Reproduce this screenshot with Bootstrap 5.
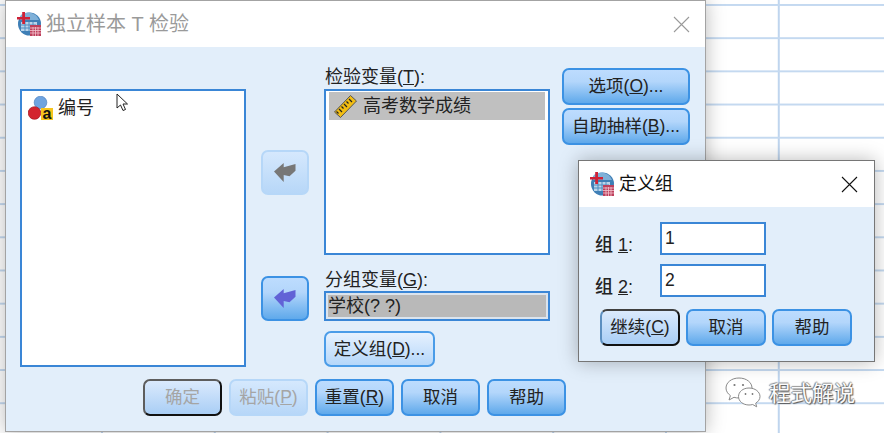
<!DOCTYPE html>
<html lang="zh-CN">
<head>
  <meta charset="UTF-8">
  <meta name="viewport" content="width=device-width, initial-scale=1">
  <title>独立样本 T 检验</title>
  <link href="https://cdn.jsdelivr.net/npm/bootstrap@5.3.2/dist/css/bootstrap.min.css" rel="stylesheet">
  <style>
    body {
      width: 884px;
      height: 433px;
      overflow: hidden;
      position: relative;
      background-color: #fff;
      background-image:
        linear-gradient(#c4d9f0 2px, transparent 2px),
        linear-gradient(90deg, #bfd5ee 2px, transparent 2px);
      background-size: 100% 33.2px, 112.8px 100%;
      background-position: 0 4px, 101px 0;
      font-family: "Liberation Sans", "Noto Sans CJK SC", sans-serif;
      font-size: 17.5px;
      color: #222;
    }

    /* windows on the desktop */
    .win {
      position: absolute;
      background: #e2eefa;
      box-shadow: 0 0 18px rgba(0, 0, 0, .28);
    }
    .win-main { left: 5px; top: 0; width: 701px; height: 432px; border: 1px solid #a3a3a3; }
    .win-group { left: 578px; top: 160px; width: 297px; height: 202px; border: 1px solid #767676; }

    .win-title { background: #fff; gap: 5px; }
    .win-main .win-title { height: 46px; padding-left: 11px; padding-right: 15px; font-size: 20px; color: #9a9a9a; }
    .win-group .win-title { height: 46px; padding-left: 11px; padding-right: 16px; font-size: 18px; color: #111; }
    .win-title svg.app-ico { width: 24px; height: 24px; }

    /* main dialog */
    .main-body { padding: 21px 14px 0; }
    .col-list { width: 226px; margin-top: 21px; }
    .col-arrows { width: 48px; margin-left: 15px; padding-top: 82px; gap: 81px; }
    .col-fields { width: 226px; margin-left: 15px; }
    .col-side { width: 128px; margin-left: 12px; gap: 3px; }
    .field-label { height: 21px; line-height: 18px; white-space: nowrap; padding-left: 1px; font-size: 18px; }
    .field-label-b { height: 36px; line-height: 50px; }

    .var-box { border: 2px solid #3a86d6; background: #fff; border-radius: 0; }
    .box-left { height: 278px; padding: 3px 6px; }
    .box-test { height: 166px; padding: 1px 3px; }
    .var-row {
      background: transparent;
      border: 0;
      border-radius: 0;
      padding: 0;
      height: 28px;
      gap: 5px;
      font-size: 18px;
      color: #222;
    }
    .var-row.is-picked { background: #c0c0c0; padding-left: 4px; }
    .var-row svg { width: 25px; height: 25px; flex: none; }

    .group-field {
      height: 30px;
      border: 2px solid #3a86d6;
      outline: 2px solid #dbe4ee;
      outline-offset: -4px;
      background: #b9b9b9;
      padding-left: 2px;
      line-height: 27px;
      font-size: 18px;
      white-space: pre;
    }

    /* buttons */
    .spss-btn {
      --bs-btn-padding-x: 0;
      --bs-btn-padding-y: 0;
      --bs-btn-font-size: 17.5px;
      --bs-btn-border-width: 2px;
      --bs-btn-border-radius: 7px;
      --bs-btn-disabled-opacity: 1;
      --bs-btn-color: #222;
      --bs-btn-disabled-color: #a5a5a5;
      height: 37px;
      white-space: nowrap;
      color: #222;
      border-color: #3c92e4;
      background: linear-gradient(#bddcfe, #b3d6fb 35%, #5fa9eb);
    }
    .spss-btn:disabled { color: #a5a5a5; border-color: #b6d7f8; background: linear-gradient(#d5e8fd, #b7d7f8); }
    .btn-soft { background: linear-gradient(#e6f1fe, #b5d7fa); border-color: #4a9ce8; }
    .btn-focus {
      border-color: #3f3f3f #111 #111 #5c8fc0;
      background: linear-gradient(#dbeafd, #a9cef5);
    }
    .btn-focus:disabled { border-color: #5d5d5d #111 #111 #5d5d5d; background: linear-gradient(#dbeafd, #a9cef5); }
    .btn-arrow { width: 48px; height: 45px; }
    .btn-arrow svg { width: 22px; height: 19px; }
    .btn-wide { width: 111px; height: 36px; margin-top: 10px; }
    .bottom-row { margin-top: 12px; margin-left: 123px; gap: 7px; }
    .bottom-row .spss-btn { width: 79px; }

    /* group dialog */
    .group-body { padding: 15px 21px 0 16px; }
    .group-row { height: 33px; margin-bottom: 9px; }
    .group-row label { width: 65px; padding-top: 13px; margin: 0; font-size: 18px; font-weight: 500; }
    .group-input {
      width: 106px;
      height: 33px;
      padding: 0 3px;
      border: 2px solid #3a86d6;
      border-radius: 0;
      font-size: 17.5px;
      color: #222;
    }
    .group-btns { margin-left: 5px; margin-top: 12px; gap: 6px; }
    .group-btns .spss-btn { width: 80px; }

    .close-x { width: 17px; height: 17px; }

    .cursor-ico { position: absolute; left: 116px; top: 93px; width: 13px; height: 19px; }

    /* watermark */
    .wm { position: absolute; left: 725px; top: 375px; gap: 8px; }
    .wm svg { width: 36px; height: 32px; }
    .wm span {
      font-size: 21.5px;
      color: #fbfbfb;
      text-shadow: 1px 1px 1px #555, -1px 0 1px #777, 0 -1px 1px #999;
      margin-top: 3px;
      white-space: nowrap;
    }
  </style>
</head>
<body>
  <svg width="0" height="0" class="position-absolute">
    <symbol id="spss" viewBox="0 0 24 24">
      <circle cx="12.5" cy="12" r="11.5" fill="#3f7fb6"/>
      <path d="M3 4a11.5 11.5 0 0 1 19 4H3z" fill="#7fb0d8"/>
      <path d="M4 10h16v9H4z" fill="#b9d4ea"/>
      <path d="M4 13h15M4 16h13M8 10v9M12 10v9M16 10v9" stroke="#4f8cc0" stroke-width="1"/>
      <path d="M0 5h13v2.6H0z M5.2 0h2.8v12H5.200z" fill="#cf2136"/>
      <rect x="13" y="13" width="11" height="11" fill="#bd3f5b"/>
      <path d="M13 16h11M13 18.500h11M13 21h11M16 15v9M18.500 15v9M21 15v9" stroke="#f2c4cf" stroke-width=".8"/>
    </symbol>
    <symbol id="back-arrow" viewBox="0 0 22 19">
      <path d="M0 8.500 9.700 0v4.300L21.500 1v6.700l-6 5.600-5.800-1.300V19z"/>
    </symbol>
    <symbol id="x-mark" viewBox="0 0 17 17">
      <path d="M1 1l15 15M16 1L1 16" stroke="currentColor" stroke-width="1.100" fill="none"/>
    </symbol>
  </svg>

  <div class="win win-main">
    <div class="win-title d-flex align-items-center">
      <svg class="app-ico"><use href="#spss"/></svg>
      <span>独立样本 T 检验</span>
      <svg class="close-x ms-auto"><use href="#x-mark"/></svg>
    </div>
    <div class="main-body">
      <div class="d-flex">
        <div class="col-list">
          <div class="var-box box-left list-group">
            <div class="list-group-item var-row d-flex align-items-center">
              <svg viewBox="0 0 25 25">
                <circle cx="12.500" cy="6.500" r="6.300" fill="#6fa4e0" stroke="#4a7fc0" stroke-width=".7"/>
                <circle cx="6.500" cy="17" r="6.300" fill="#d3242f" stroke="#a51822" stroke-width=".7"/>
                <rect x="13" y="12" width="12" height="12" fill="#f6c51d"/>
                <text x="19" y="23" text-anchor="middle" font-family="Liberation Sans" font-weight="700" font-size="16" fill="#111">a</text>
              </svg>
              <span>编号</span>
            </div>
          </div>
        </div>
        <div class="col-arrows d-flex flex-column">
          <button class="btn spss-btn btn-arrow d-flex align-items-center justify-content-center" disabled>
            <svg fill="#777"><use href="#back-arrow"/></svg>
          </button>
          <button class="btn spss-btn btn-arrow d-flex align-items-center justify-content-center">
            <svg fill="#6262d6"><use href="#back-arrow"/></svg>
          </button>
        </div>
        <div class="col-fields d-flex flex-column align-items-start">
          <div class="field-label">检验变量(<u>T</u>):</div>
          <div class="var-box box-test list-group w-100">
            <div class="list-group-item var-row is-picked d-flex align-items-center">
              <svg viewBox="0 0 25 25">
                <path d="M17.500 1.500 23.500 7 7.500 23.500 1.500 18z" fill="#f2bd12" stroke="#555" stroke-width="1"/>
                <path d="M16 5l3 3M13.500 7.500l2 2M11 10l3 3M8.500 12.500l2 2M6 15l3 3M3.500 17.500l2 2" stroke="#222" stroke-width="1.200"/>
              </svg>
              <span>高考数学成绩</span>
            </div>
          </div>
          <div class="field-label field-label-b">分组变量(<u>G</u>):</div>
          <div class="group-field w-100">学校(? ?)</div>
          <button class="btn spss-btn btn-soft btn-wide">定义组(<u>D</u>)...</button>
        </div>
        <div class="col-side d-flex flex-column">
          <button class="btn spss-btn">选项(<u>O</u>)...</button>
          <button class="btn spss-btn">自助抽样(<u>B</u>)...</button>
        </div>
      </div>
      <div class="bottom-row d-flex">
        <button class="btn spss-btn btn-focus" disabled>确定</button>
        <button class="btn spss-btn" disabled>粘贴(<u>P</u>)</button>
        <button class="btn spss-btn">重置(<u>R</u>)</button>
        <button class="btn spss-btn">取消</button>
        <button class="btn spss-btn">帮助</button>
      </div>
    </div>
  </div>

  <svg class="cursor-ico" viewBox="0 0 13 19">
    <path d="M1 1v14l3.500-3 2.500 5.500 2.500-1-2.500-5.500h4.500z" fill="#fff" stroke="#222" stroke-width="1"/>
  </svg>

  <div class="wm d-flex align-items-center">
    <svg viewBox="0 0 36 32" fill="#fff" stroke="#8a8a8a" stroke-width="1">
      <path d="M14 1C6.500 1 1 5.500 1 11c0 3 1.700 5.700 4.400 7.600L4 23l5-2.700c1.500.5 3.200.7 5 .7 7.500 0 13-4.500 13-10S21.500 1 14 1z"/>
      <path d="M24 11c-6 0-10.500 3.800-10.500 8.500S18 28 24 28c1.300 0 2.500-.2 3.700-.5l4 2.300-1-3.600c2.600-1.600 4.300-4 4.300-6.700C35 14.800 30 11 24 11z"/>
      <circle cx="9.500" cy="8" r="1.100" fill="#777" stroke="none"/>
      <circle cx="18" cy="8" r="1.100" fill="#777" stroke="none"/>
      <circle cx="20.500" cy="17" r=".9" fill="#777" stroke="none"/>
      <circle cx="27.500" cy="17" r=".9" fill="#777" stroke="none"/>
    </svg>
    <span>程式解说</span>
  </div>

  <div class="win win-group">
    <div class="win-title d-flex align-items-center">
      <svg class="app-ico"><use href="#spss"/></svg>
      <span>定义组</span>
      <svg class="close-x ms-auto"><use href="#x-mark"/></svg>
    </div>
    <div class="group-body">
      <div class="group-row d-flex align-items-center">
        <label for="g1">组 <u>1</u>:</label>
        <input id="g1" class="form-control group-input" value="1">
      </div>
      <div class="group-row d-flex align-items-center">
        <label for="g2">组 <u>2</u>:</label>
        <input id="g2" class="form-control group-input" value="2">
      </div>
      <div class="group-btns d-flex">
        <button class="btn spss-btn btn-focus">继续(<u>C</u>)</button>
        <button class="btn spss-btn">取消</button>
        <button class="btn spss-btn">帮助</button>
      </div>
    </div>
  </div>

  <script src="https://cdn.jsdelivr.net/npm/bootstrap@5.3.2/dist/js/bootstrap.bundle.min.js"></script>
</body>
</html>
